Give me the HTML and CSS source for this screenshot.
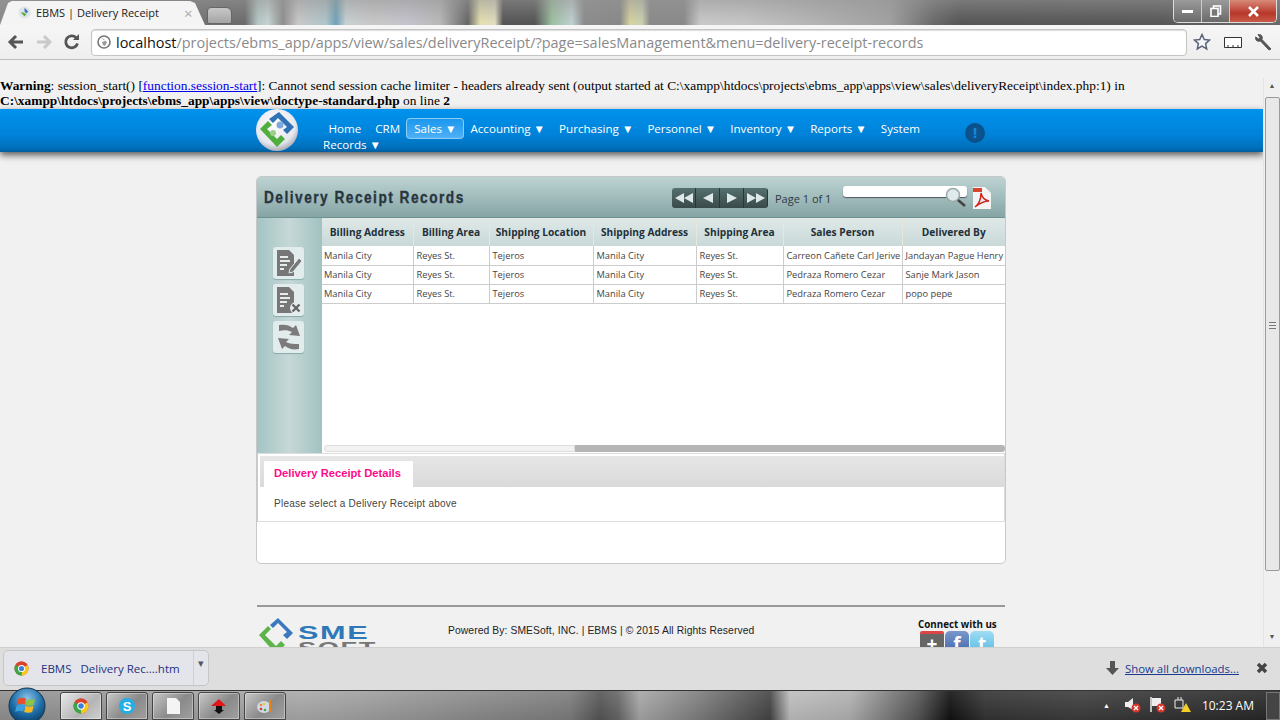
FILE: index.html
```html
<!DOCTYPE html>
<html lang="en">
<head>
  <meta charset="UTF-8" />
  <title>EBMS | Delivery Receipt</title>
  <link rel="stylesheet" href="styles.css">
</head>
<body>

  <!-- browser chrome -->
  <div class="tabstrip">
    <div class="tab">
      <svg class="favicon" viewBox="0 0 14 14"><circle cx="7" cy="7" r="6.500" fill="#dfe4ea"/><path d="M7 2l4 4-2 2-2-2z" fill="#3b78b8"/><path d="M3 7l4 4 2-2-3-2z" fill="#5aaa3c"/></svg>
      <span class="tab-title">EBMS | Delivery Receipt</span>
      <span class="tab-close">×</span>
    </div>
    <div class="newtab"></div>
    <div class="winbtns">
      <span class="winbtn"><svg width="12" height="6" viewBox="0 0 12 6"><rect y="2" width="11" height="3" fill="#fff"/></svg></span>
      <span class="winbtn"><svg width="12" height="12" viewBox="0 0 12 12"><rect x="3.500" y="1" width="7" height="8" fill="none" stroke="#fff" stroke-width="1.600"/><rect x="1" y="3.500" width="7" height="8" fill="#777" stroke="#fff" stroke-width="1.600"/></svg></span>
      <span class="winbtn winbtn-close"><svg width="13" height="11" viewBox="0 0 13 11"><path d="M2 1l9 9M11 1l-9 9" stroke="#fff" stroke-width="2.600"/></svg></span>
    </div>
  </div>

  <div class="toolbar">
    <svg class="tool" width="18" height="16" viewBox="0 0 18 16"><path d="M9 2L3 8l6 6M3.500 8H16" fill="none" stroke="#555" stroke-width="3"/></svg>
    <svg class="tool" width="18" height="16" viewBox="0 0 18 16"><path d="M9 2l6 6-6 6M14.500 8H2" fill="none" stroke="#c9c9c9" stroke-width="3"/></svg>
    <svg class="tool" width="18" height="18" viewBox="0 0 18 18"><path d="M14.500 10.500A6 6 0 1 1 13 4.600" fill="none" stroke="#555" stroke-width="2.800"/><path d="M10 7h6V1z" fill="#555"/></svg>
    <div class="omnibox">
      <svg width="14" height="14" viewBox="0 0 14 14"><circle cx="7" cy="7" r="6" fill="#fff" stroke="#777" stroke-width="1.600"/><path d="M4 3l3 1 1 2-3 1 1 3 2 1 2-4" fill="#999"/></svg>
      <span class="url"><b>localhost</b>/projects/ebms_app/apps/view/sales/deliveryReceipt/?page=salesManagement&amp;menu=delivery-receipt-records</span>
    </div>
    <svg class="star" width="18" height="18" viewBox="0 0 18 18"><path d="M9 1.500l2.300 5 5.200.6-3.900 3.500 1.100 5.300L9 13.200l-4.700 2.700 1.100-5.300L1.500 7.100l5.200-.6z" fill="#f4f6fa" stroke="#5a6478" stroke-width="1.500"/></svg>
    <svg class="page-ico" width="18" height="11" viewBox="0 0 18 11"><path d="M.5.500h17v10H.5z" fill="#fff" stroke="#333"/><path d="M4 10V8M9 10V8M14 10V8" stroke="#333"/></svg>
    <svg class="wrench" width="18" height="18" viewBox="0 0 18 18"><path d="M16 16L7 6.500a4 4 0 0 0-1-4.500L3 1.500l2 3-1.500 1.500-3-2 .5 3a4 4 0 0 0 4.500 1L14 17z" fill="#555" stroke="#555"/></svg>
  </div>

  <!-- page viewport -->
  <div class="viewport">
    <div class="page">
      <div class="php-warning"><b>Warning</b>: session_start() [<a href="#">function.session-start</a>]: Cannot send session cache limiter - headers already sent (output started at C:\xampp\htdocs\projects\ebms_app\apps\view\sales\deliveryReceipt\index.php:1) in <b>C:\xampp\htdocs\projects\ebms_app\apps\view\doctype-standard.php</b> on line <b>2</b></div>

      <nav class="navbar">
        <div class="nav-inner">
          <svg class="logo" viewBox="0 0 42 44"><defs><radialGradient id="ball" cx="45%" cy="35%" r="70%"><stop offset="0" stop-color="#fff"/><stop offset=".7" stop-color="#e6e6ee"/><stop offset="1" stop-color="#9a9aa8"/></radialGradient></defs><circle cx="21" cy="22" r="21" fill="url(#ball)"/><path d="M23 4l15 15-7 7-4-4 4-3-9-9-5 5-4-4z" fill="#2f72b5"/><path d="M4 21l8-8 4 4-5 4 10 10 4-4 4 4-8 8z" fill="#4fae3e"/><circle cx="24" cy="17" r="3.500" fill="#7fa8d8"/><circle cx="17" cy="25" r="3" fill="#9cd08a"/></svg>
          <div class="nav-links">
            <a href="#">Home</a>
            <a href="#">CRM</a>
            <a href="#" class="active">Sales ▼</a>
            <a href="#">Accounting ▼</a>
            <a href="#">Purchasing ▼</a>
            <a href="#">Personnel ▼</a>
            <a href="#">Inventory ▼</a>
            <a href="#">Reports ▼</a>
            <a href="#">System</a>
            <a href="#" class="wrapped">Records ▼</a>
          </div>
          <span class="alert-dot">!</span>
        </div>
      </nav>

      <div class="panel">
        <div class="panel-head">
          <h1>Delivery Receipt Records</h1>
          <div class="pager">
            <span class="pager-btns">
              <span class="pbtn"><svg width="20" height="10" viewBox="0 0 20 10"><path d="M10 0v10L1 5zM19 0v10l-9-5z"/></svg></span>
              <span class="pbtn"><svg width="10" height="10" viewBox="0 0 10 10"><path d="M10 0v10L0 5z"/></svg></span>
              <span class="pbtn"><svg width="10" height="10" viewBox="0 0 10 10"><path d="M0 0v10l10-5z"/></svg></span>
              <span class="pbtn"><svg width="20" height="10" viewBox="0 0 20 10"><path d="M1 0v10l9-5zM10 0v10l9-5z"/></svg></span>
            </span>
            <span class="page-count">Page 1 of 1</span>
          </div>
          <div class="search-box">
            <span class="search-field"></span>
            <svg width="24" height="22" viewBox="0 0 24 22"><circle cx="10" cy="9" r="6.500" fill="#dfeaec" stroke="#9aa" stroke-width="1.500"/><path d="M15 14l7 6" stroke="#444" stroke-width="2.600"/></svg>
          </div>
          <svg class="pdf" width="18" height="22" viewBox="0 0 18 22"><path d="M0 0h12l6 6v16H0z" fill="#f4f4f4"/><rect y="1" width="9" height="4" fill="#d8452e"/><path d="M2 20c4-3 6-8 6-14 1 5 3 7 8 8-5 0-9 2-14 6z" fill="none" stroke="#d0261c" stroke-width="1.500"/></svg>
        </div>

        <div class="panel-body">
          <div class="side-tools">
            <span class="side-btn"><svg width="28" height="28" viewBox="0 0 28 28"><path d="M2 1h12l5 5v21H2z" fill="#777"/><path d="M5 8h8M5 12h10M5 16h7M5 20h4" stroke="#e4ecec" stroke-width="1.800"/><path d="M24 9l3 3-9 11-4 1 1-4z" fill="#777" stroke="#e4ecec"/></svg></span>
            <span class="side-btn"><svg width="28" height="28" viewBox="0 0 28 28"><path d="M2 1h12l5 5v21H2z" fill="#777"/><path d="M5 8h8M5 12h10M5 16h7M5 20h4" stroke="#e4ecec" stroke-width="1.800"/><circle cx="21" cy="22" r="6" fill="#e4ecec"/><path d="M17.500 18.500l7 7M24.500 18.500l-7 7" stroke="#666" stroke-width="2.400"/></svg></span>
            <span class="side-btn"><svg width="28" height="28" viewBox="0 0 28 28"><path d="M4 2c6-1 10 0 14 3l3-3 4 11-11-1 3-3C13 7 9 7 4 8z" fill="#7b7b7b"/><path d="M24 26c-6 1-10 0-14-3l-3 3-4-11 11 1-3 3c4 2 8 2 13 2z" fill="#7b7b7b"/></svg></span>
          </div>
          <div class="grid-area">
            <table class="grid">
              <colgroup>
                <col class="c1"><col class="c2"><col class="c3"><col class="c4"><col class="c5"><col class="c6"><col class="c7">
              </colgroup>
              <thead>
                <tr><th>Billing Address</th><th>Billing Area</th><th>Shipping Location</th><th>Shipping Address</th><th>Shipping Area</th><th>Sales Person</th><th>Delivered By</th></tr>
              </thead>
              <tbody>
                <tr><td>Manila City</td><td>Reyes St.</td><td>Tejeros</td><td>Manila City</td><td>Reyes St.</td><td>Carreon Cañete Carl Jerive</td><td>Jandayan Pague Henry</td></tr>
                <tr><td>Manila City</td><td>Reyes St.</td><td>Tejeros</td><td>Manila City</td><td>Reyes St.</td><td>Pedraza Romero Cezar</td><td>Sanje Mark Jason</td></tr>
                <tr><td>Manila City</td><td>Reyes St.</td><td>Tejeros</td><td>Manila City</td><td>Reyes St.</td><td>Pedraza Romero Cezar</td><td>popo pepe</td></tr>
              </tbody>
            </table>
            <div class="hscroll"><span class="hscroll-track"></span><span class="hscroll-thumb"></span></div>
          </div>
        </div>

        <div class="details">
          <div class="tabs"><span class="details-tab">Delivery Receipt Details</span></div>
          <p>Please select a Delivery Receipt above</p>
        </div>
      </div>

      <footer class="site-foot">
        <div class="foot-logo">
          <svg width="38" height="34" viewBox="0 0 38 34"><path d="M21 1l15 15-6 6-4-4 4-3-9-9-5 5-3-3z" fill="#3b78c0"/><path d="M2 18l9-9 3 3-6 6 11 11 5-5 4 4-9 9z" fill="#5db54a"/></svg>
          <div class="sme-word"><span class="sme">SME</span><span class="soft">SOFT</span></div>
        </div>
        <div class="powered">Powered By: SMESoft, INC. | EBMS | © 2015 All Rights Reserved</div>
        <div class="connect">
          <b>Connect with us</b>
          <div class="socials">
            <span class="soc soc-g">+</span>
            <span class="soc soc-f">f</span>
            <span class="soc soc-t">t</span>
          </div>
        </div>
      </footer>
    </div>
    <div class="vscroll">
      <span class="vs-arrow">▲</span>
      <span class="vs-thumb"><span class="vs-grip"></span></span>
      <span class="vs-space"></span>
      <span class="vs-arrow">▼</span>
    </div>
  </div>

  <!-- downloads shelf -->
  <div class="shelf">
    <div class="dl-item">
      <svg width="15" height="15" viewBox="0 0 32 32"><use href="#chrome"/></svg>
      <span class="dl-name">EBMS &nbsp;&nbsp;Delivery Rec....htm</span>
      <span class="dl-caret">▾</span>
    </div>
    <svg class="dl-arrow" width="13" height="14" viewBox="0 0 13 14"><path d="M4 0h5v7h4l-6.500 7L0 7h4z" fill="#555"/></svg>
    <a href="#" class="dl-all">Show all downloads...</a>
    <svg class="dl-x" width="12" height="12" viewBox="0 0 12 12"><path d="M2 2l8 8M10 2l-8 8" stroke="#444" stroke-width="3.400"/></svg>
  </div>

  <!-- windows taskbar -->
  <div class="taskbar">
    <svg class="orb" width="38" height="38" viewBox="0 0 38 38"><defs><radialGradient id="orbfill" cx="50%" cy="30%" r="70%"><stop offset="0" stop-color="#8cc4ea"/><stop offset=".6" stop-color="#1c6ea8"/><stop offset="1" stop-color="#0d3c66"/></radialGradient></defs><circle cx="19" cy="19" r="18" fill="url(#orbfill)" stroke="#14334f"/><path d="M10 12q4-2 8-.5l-1.300 6q-4-1.500-8 .5z" fill="#e8502c"/><path d="M19 12q4 1.500 8 0l-1.300 6q-4 1.500-8 0z" fill="#8cc63f"/><path d="M8.500 19q4-2 8-.5l-1.300 6q-4-1.500-8 .5z" fill="#3aa0e0"/><path d="M17.500 19q4 1.500 8 0l-1.300 6q-4 1.500-8 0z" fill="#f6b81e"/></svg>
    <span class="task-btn task-on">
      <svg width="16" height="16" viewBox="0 0 32 32"><defs><g id="chrome"><circle cx="16" cy="16" r="15" fill="#d9442f"/><path d="M16 16l13-7.500A15 15 0 0 1 16 31z" fill="#f8c91c"/><path d="M16 16v15A15 15 0 0 1 3 8.500z" fill="#3aa648"/><path d="M3 8.500A15 15 0 0 1 29 8.500H16z" fill="#d9442f"/><circle cx="16" cy="16" r="7.500" fill="#fff"/><circle cx="16" cy="16" r="5.500" fill="#3d80d8"/></g></defs><use href="#chrome"/></svg>
    </span>
    <span class="task-btn"><svg width="18" height="18" viewBox="0 0 18 18"><circle cx="9" cy="9" r="8" fill="#23aee6"/><text x="9" y="13.500" class="skype-s">S</text></svg></span>
    <span class="task-btn"><svg width="13" height="16" viewBox="0 0 13 16"><path d="M0 0h9l4 4v12H0z" fill="#f4f4f4"/></svg></span>
    <span class="task-btn"><svg width="16" height="16" viewBox="0 0 16 16"><path d="M8 1l7 7H0z" fill="#e01818"/><path d="M5 8h6v4h2l-5 4-5-4h2z" fill="#111"/></svg></span>
    <span class="task-btn"><svg width="16" height="16" viewBox="0 0 16 16"><ellipse cx="7" cy="9" rx="7" ry="6" fill="#cfdbe6"/><circle cx="4" cy="7" r="1.300" fill="#e84"/><circle cx="7" cy="6" r="1.300" fill="#ec3"/><circle cx="4" cy="11" r="1.300" fill="#d33"/><circle cx="8" cy="12" r="1.300" fill="#4a4"/><path d="M13 2v12" stroke="#e88418" stroke-width="2"/></svg></span>
    <div class="tray">
      <span class="tray-up">▲</span>
      <svg width="18" height="16" viewBox="0 0 18 16"><path d="M1 5h3l5-4v12l-5-3H1z" fill="#eee"/><circle cx="12" cy="11" r="4.500" fill="#d8352a"/><path d="M10 9l4 4M14 9l-4 4" stroke="#fff" stroke-width="1.300"/></svg>
      <svg width="18" height="16" viewBox="0 0 18 16"><path d="M2 0v15" stroke="#eee" stroke-width="1.500"/><path d="M3 1h9v8H3z" fill="#eee"/><circle cx="12" cy="11" r="4.500" fill="#d8352a"/><path d="M10 9l4 4M14 9l-4 4" stroke="#fff" stroke-width="1.300"/></svg>
      <svg width="18" height="16" viewBox="0 0 18 16"><path d="M1 3h8v8H1z" fill="none" stroke="#eee"/><path d="M4 0v3M7 0v3" stroke="#eee"/><path d="M12 6l5 9H7z" fill="#f3cf28"/></svg>
      <span class="clock">10:23 AM</span>
    </div>
    <span class="show-desktop"></span>
  </div>

</body>
</html>
```

FILE: styles.css
```css
* {
  box-sizing: border-box;
}
html, body {
  margin: 0;
  height: 720px;
  overflow: hidden;
}
body {
  display: flex;
  flex-direction: column;
  width: 1280px;
  background: #ddd;
  font-family: 'Open Sans', sans-serif;
}

/* tab strip - the blurred wallpaper shows through */
.tabstrip {
  height: 25px;
  flex: none;
  display: flex;
  align-items: flex-end;
  background: linear-gradient(rgba(150,150,150,.55), rgba(150,150,150,0) 90%), linear-gradient(90deg, #8a8a8a 0, #6c6c6c 245px, #b4c8c6 258px, #c4d2d0 268px, #8e8e8e 283px, #c8c8c8 298px, #b0c4c8 326px, #6fa2b8 336px, #c8d0d2 346px, #c8c8c8 370px, #c4c2cc 410px, #b8b8b8 440px, #666 468px, #e4dfae 480px, #e0dcc0 495px, #555 503px, #555 535px, #9cc0a0 552px, #c0d0d0 572px, #8c8c8c 584px, #888 620px, #d6d2a0 630px, #c8d0b0 642px, #8a8a8a 650px, #8a8a8a 684px, #c8c8c8 700px, #c4c4c4 745px, #b4b4b4 810px, #a0a0a0 890px, #6a6a6a 933px, #565656 960px, #585858 1160px, #6a6a6a 1280px);
}
.tab {
  width: 205px;
  height: 25px;
  padding-left: 18px;
  display: flex;
  align-items: center;
  background: #f4f4f4;
  clip-path: polygon(0 100%, 8px 3px, 12px 1px, 190px 1px, 195px 3px, 205px 100%);
  font-size: 11px;
  color: #222;
}
.favicon {
  width: 13px;
  height: 13px;
  margin-right: 5px;
  flex: none;
}
.tab-title {
  width: 148px;
  white-space: nowrap;
}
.tab-close {
  color: #aaa;
  font-size: 15px;
}
.newtab {
  width: 25px;
  height: 17px;
  margin: 0 0 1px 2px;
  background: linear-gradient(#c8c8c8, #a4a4a4);
  border: 1px solid #666;
  border-radius: 4px 6px 2px 2px;
}
.winbtns {
  display: flex;
  height: 23px;
  margin: 0 3px 2px auto;
  align-self: flex-start;
  border: 1px solid #ddd;
  border-top: none;
  border-radius: 0 0 5px 5px;
  overflow: hidden;
}
.winbtn {
  width: 28px;
  display: flex;
  align-items: center;
  justify-content: center;
  background: linear-gradient(#9a9a9a, #6a6a6a);
  border-right: 1px solid #ccc;
}
.winbtn-close {
  width: 46px;
  border-right: none;
  background: linear-gradient(#d88a78, #b8372a 60%, #c85a48);
}

/* toolbar */
.toolbar {
  height: 35px;
  flex: none;
  display: flex;
  align-items: center;
  padding-left: 7px;
  background: linear-gradient(#f6f6f6, #eeeeee);
  border-bottom: 1px solid #bdbdbd;
}
.tool {
  flex: none;
  margin-right: 10px;
}
.omnibox {
  width: 1096px;
  height: 27px;
  flex: none;
  padding: 0 4px 0 5px;
  display: flex;
  align-items: center;
  gap: 5px;
  background: #fff;
  border: 1px solid #c4c4c4;
  border-radius: 4px;
  box-shadow: inset 0 1px 1px #ddd;
}
.url {
  flex: 1;
  font-size: 14.450px;
  color: #8a8a8a;
  white-space: nowrap;
  overflow: hidden;
}
.url b {
  font-weight: normal;
  color: #111;
}
.star {
  flex: none;
  margin-left: 6px;
}
.page-ico {
  flex: none;
  margin-left: 13px;
}
.wrench {
  flex: none;
  margin-left: 13px;
}

/* viewport */
.viewport {
  flex: 1;
  min-height: 0;
  display: flex;
  overflow: hidden;
  background: #f1f1f1;
}
.page {
  flex: 1;
  min-width: 0;
  overflow: hidden;
  padding-top: 18px;
}
.php-warning {
  font-family: 'Liberation Serif', serif;
  font-size: 13.400px;
  line-height: 15px;
  height: 31px;
  color: #000;
}
.php-warning a {
  color: #00e;
}

/* nav */
.navbar {
  height: 43px;
  background: linear-gradient(#0093ee, #0082d8 60%, #0070bc 90%, #005e9e);
  box-shadow: 0 3px 7px rgba(0,0,0,0.65);
  position: relative;
}
.nav-inner {
  width: 750px;
  margin-left: 256px;
  display: flex;
}
.logo {
  width: 42px;
  height: 44px;
  flex: none;
  margin-top: -1px;
}
.nav-links {
  width: 628px;
  margin-left: 25px;
  padding-top: 12px;
  font-size: 11.600px;
  line-height: 16px;
}
.nav-links a {
  color: #fff;
  text-decoration: none;
  padding: 0 5.500px;
}
.nav-links a.active {
  background: linear-gradient(#1a97ee, #4fb0f6);
  border: 1px solid #8ccdf8;
  border-radius: 4px;
  padding: 2px 7px;
  margin: 0 -2.500px;
}
.nav-links a.wrapped {
  padding-left: 0;
}
.alert-dot {
  width: 20px;
  height: 20px;
  margin: 14px 0 0 14px;
  flex: none;
  border-radius: 50%;
  background: radial-gradient(#0a5a9a, #0a4a80);
  color: #1f87d8;
  font-weight: bold;
  font-size: 14px;
  line-height: 20px;
  text-align: center;
}

/* panel */
.panel {
  width: 750px;
  height: 388px;
  margin: 24px 0 0 256px;
  background: #fff;
  border: 1px solid #c8c8c8;
  border-radius: 5px;
  overflow: hidden;
}
.panel-head {
  height: 41px;
  display: flex;
  align-items: center;
  padding: 2px 0 0 7px;
  background: linear-gradient(#bdd3d3, #85a5a4);
  border-bottom: 1px solid #6f9190;
}
.panel-head h1 {
  margin: 0;
  width: 408px;
  flex: none;
  font-family: 'Liberation Sans', sans-serif;
  font-size: 16px;
  font-weight: bold;
  letter-spacing: 1.800px;
  color: #26363a;
  -webkit-text-stroke: .3px #26363a;
  text-shadow: 1px 1px 0 #9ab;
  transform: scaleX(.85);
  transform-origin: left;
  white-space: nowrap;
}
.pager {
  display: flex;
  align-items: center;
}
.pager-btns {
  display: flex;
  height: 20px;
  border-radius: 3px;
  overflow: hidden;
}
.pbtn {
  width: 24px;
  display: flex;
  align-items: center;
  justify-content: center;
  background: linear-gradient(#55706f, #3a4a4a);
  border-right: 1px solid #2a3636;
  fill: #dfe8e8;
}
.page-count {
  margin-left: 7px;
  font-size: 11px;
  color: #2c3a44;
  width: 68px;
}
.search-box {
  display: flex;
  width: 126px;
  height: 22px;
  align-items: flex-start;
  margin-top: -2px;
}
.search-field {
  width: 124px;
  height: 11px;
  background: #fff;
  border-radius: 3px;
  box-shadow: 0 1px 1px #556;
}
.search-box svg {
  margin-left: -24px;
  flex: none;
}
.pdf {
  margin-left: 4px;
  flex: none;
}

.panel-body {
  height: 235px;
  display: flex;
}
.side-tools {
  width: 65px;
  flex: none;
  padding: 29px 2px 0 0;
  display: flex;
  flex-direction: column;
  align-items: center;
  gap: 5px;
  background: linear-gradient(90deg, #a4c4c4, #c6d8d7 50%, #a2c2c2);
}
.side-btn {
  width: 31px;
  height: 32px;
  display: flex;
  align-items: center;
  justify-content: center;
  background: #e3ecec;
  border-radius: 3px;
  box-shadow: 0 1px 1px #8aa;
}
.grid-area {
  flex: 1;
  min-width: 0;
  display: flex;
  flex-direction: column;
  justify-content: space-between;
}
.grid {
  width: 683px;
  table-layout: fixed;
  border-collapse: collapse;
  font-size: 9.300px;
  color: #444;
}
.c1 { width: 91px; }
.c2 { width: 76px; }
.c3 { width: 104px; }
.c4 { width: 103px; }
.c5 { width: 87px; }
.c6 { width: 119px; }
.c7 { width: 103px; }
.grid th {
  height: 28px;
  font-size: 10.200px;
  color: #23303a;
  background: linear-gradient(#dfe8e7, #c8d9d8);
  border-right: 1px solid #e8e6da;
  padding: 0;
  white-space: nowrap;
}
.grid td {
  height: 19px;
  padding: 0 0 0 3px;
  border-right: 1px solid #ccc;
  border-bottom: 1px solid #ccc;
  white-space: nowrap;
  overflow: hidden;
}
.grid td:first-child {
  padding-left: 2px;
}
.grid td:last-child, .grid th:last-child {
  border-right: none;
}
.hscroll {
  height: 7px;
  margin: 0 0 1px 2px;
  display: flex;
}
.hscroll-track {
  width: 251px;
  background: #f2f2f2;
  border: 1px solid #ddd;
  border-radius: 3px 0 0 3px;
}
.hscroll-thumb {
  flex: 1;
  background: #b5b5b5;
  border-radius: 0 3px 3px 0;
}

.details {
  height: 69px;
  border: 1px solid #ddd;
  border-left-color: #ccc;
}
.tabs {
  height: 31px;
  margin: 2px 0 0 2px;
  padding: 5px 0 0 4px;
  background: linear-gradient(#e6e6e6, #dadada);
}
.details-tab {
  display: block;
  width: 149px;
  height: 26px;
  padding-left: 10px;
  background: #fff;
  font-family: 'Liberation Sans', sans-serif;
  font-size: 11.200px;
  font-weight: bold;
  line-height: 24px;
  color: #ff0a8c;
}
.details p {
  margin: 11px 0 0 16px;
  font-family: 'Liberation Sans', sans-serif;
  font-size: 10px;
  letter-spacing: .25px;
  color: #444;
}

/* footer */
.site-foot {
  width: 748px;
  margin: 41px 0 0 257px;
  border-top: 2px solid #999;
  display: flex;
  height: 60px;
}
.foot-logo {
  width: 191px;
  padding-top: 10px;
  display: flex;
}
.sme-word {
  display: flex;
  flex-direction: column;
  margin-left: 3px;
  font-family: 'Liberation Sans', sans-serif;
  font-weight: bold;
  line-height: 15px;
  letter-spacing: 1px;
}
.sme {
  font-size: 18px;
  color: #2f78b8;
  margin-top: 9px;
  transform: scaleX(1.700);
  transform-origin: left;
}
.soft {
  font-size: 17px;
  color: #777;
  transform: scaleX(1.600);
  transform-origin: left;
}
.powered {
  width: 470px;
  padding-top: 18px;
  font-family: 'Liberation Sans', sans-serif;
  font-size: 10.300px;
  color: #222;
  letter-spacing: .1px;
}
.connect {
  padding-top: 11px;
  font-size: 9.800px;
  line-height: 14px;
  color: #111;
}
.socials {
  display: flex;
  gap: 1px;
  margin: -1px 0 0 2px;
}
.soc {
  width: 24px;
  height: 24px;
  border-radius: 5px;
  color: #fff;
  font-weight: bold;
  font-size: 19px;
  line-height: 26px;
  text-align: center;
}
.soc-g {
  background: linear-gradient(#d44 0 3px, #666 3px);
  border-radius: 2px;
}
.soc-f {
  background: linear-gradient(#7a98cc, #3f62a8);
}
.soc-t {
  background: linear-gradient(#9fdcf4, #55b8e4);
}

/* page scrollbar */
.vscroll {
  width: 17px;
  flex: none;
  margin-top: 18px;
  display: flex;
  flex-direction: column;
  align-items: center;
  background: #f0f0f0;
  border-left: 1px solid #e4e4e4;
}
.vs-arrow {
  height: 18px;
  font-size: 7px;
  line-height: 16px;
  color: #555;
}
.vs-thumb {
  width: 15px;
  height: 474px;
  display: flex;
  align-items: center;
  justify-content: center;
  background: #e8e8e8;
  border: 1px solid #9a9a9a;
  border-radius: 2px;
  margin-top: 1px;
}
.vs-grip {
  width: 7px;
  height: 7px;
  margin-bottom: 18px;
  background: repeating-linear-gradient(#777 0 1px, #eee 1px 3px);
}
.vs-space {
  flex: 1;
}

/* downloads shelf */
.shelf {
  height: 43px;
  flex: none;
  display: flex;
  align-items: center;
  padding: 0 0 2px 3px;
  background: #dedede;
  border-top: 1px solid #cfcfcf;
}
.dl-item {
  width: 206px;
  height: 36px;
  flex: none;
  margin-right: 897px;
  padding-left: 10px;
  display: flex;
  align-items: center;
  background: #e3e5ea;
  border: 1px solid #c6c6c6;
  border-radius: 5px;
  font-size: 11.500px;
  color: #26307e;
}
.dl-item svg {
  flex: none;
}
.dl-name {
  margin-left: 12px;
  width: 152px;
  white-space: nowrap;
}
.dl-caret {
  height: 34px;
  padding-left: 4px;
  border-left: 1px solid #cdcfd4;
  color: #556;
  font-size: 11px;
  line-height: 24px;
}
.dl-arrow {
  flex: none;
}
.dl-all {
  margin-left: 6px;
  width: 115px;
  flex: none;
  font-size: 11.400px;
  color: #1a3a90;
  white-space: nowrap;
}
.dl-x {
  margin-left: 16px;
  flex: none;
}

/* taskbar */
.taskbar {
  height: 30px;
  flex: none;
  display: flex;
  align-items: stretch;
  padding: 1px 0 0 60px;
  gap: 4px;
  position: relative;
  background: linear-gradient(rgba(255,255,255,.1), rgba(0,0,0,.08)), linear-gradient(90deg, #909090 0, #a8a8a8 300px, #a0a0a0 360px, #8a8a8a 480px, #7c7c7c 570px, #555 600px, #666 618px, #a6a6a6 640px, #808080 695px, #444 770px, #bdbdbd 790px, #b0b0b0 850px, #555 918px, #111 950px, #333 985px, #3c3c3c 1080px, #262626 1280px);
  border-top: 1px solid #333;
}
.orb {
  position: absolute;
  left: 8px;
  top: -4px;
}
.task-btn {
  width: 42px;
  display: flex;
  align-items: center;
  justify-content: center;
  background: linear-gradient(135deg, #c8c8c8, #8a8a8a 55%, #a0a0a0);
  border: 1px solid #444;
  box-shadow: inset 0 0 0 1px rgba(255,255,255,.35);
  border-radius: 3px 3px 0 0;
}
.task-on {
  background: linear-gradient(135deg, #e8e8e8, #b4b4b4 60%, #d0d0d0);
}
.skype-s {
  font-family: 'Liberation Sans', sans-serif;
  font-size: 13px;
  font-weight: bold;
  fill: #fff;
  text-anchor: middle;
}
.tray {
  margin-left: auto;
  display: flex;
  align-items: center;
  gap: 7px;
  color: #fff;
  padding: 0 12px 2px 0;
}
.tray-up {
  font-size: 7px;
  margin-right: 7px;
}
.clock {
  margin-left: 3px;
  font-size: 12px;
}
.show-desktop {
  width: 14px;
  margin-left: -4px;
  background: #444;
  border: 1px solid #777;
}
```
